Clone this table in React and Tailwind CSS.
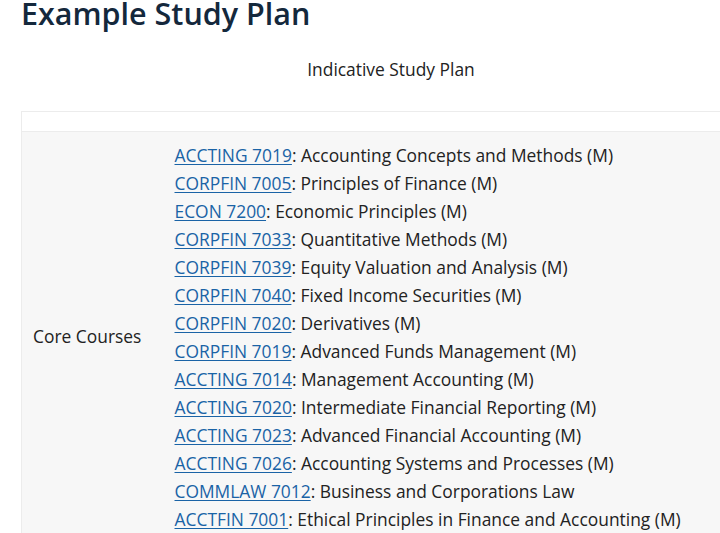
import React from 'react';

const courses = [
  ['ACCTING 7019', 'Accounting Concepts and Methods (M)'],
  ['CORPFIN 7005', 'Principles of Finance (M)'],
  ['ECON 7200', 'Economic Principles (M)'],
  ['CORPFIN 7033', 'Quantitative Methods (M)'],
  ['CORPFIN 7039', 'Equity Valuation and Analysis (M)'],
  ['CORPFIN 7040', 'Fixed Income Securities (M)'],
  ['CORPFIN 7020', 'Derivatives (M)'],
  ['CORPFIN 7019', 'Advanced Funds Management (M)'],
  ['ACCTING 7014', 'Management Accounting (M)'],
  ['ACCTING 7020', 'Intermediate Financial Reporting (M)'],
  ['ACCTING 7023', 'Advanced Financial Accounting (M)'],
  ['ACCTING 7026', 'Accounting Systems and Processes (M)'],
  ['COMMLAW 7012', 'Business and Corporations Law'],
  ['ACCTFIN 7001', 'Ethical Principles in Finance and Accounting (M)'],
];

const App = () => {
  return (
    <div className="w-[720px] h-[533px] overflow-hidden bg-white font-['Open_Sans',sans-serif] text-[#222]">
      <div className="pl-[21px]">
        <h2 className="mt-[-5px] text-[30.5px] leading-[36px] font-semibold text-[#14283c]">Example Study Plan</h2>
        <div className="w-[740px]">
          <div className="mt-[25px] text-center text-[17.4px] leading-[26px]">Indicative Study Plan</div>
          <table className="mt-[29px] w-full border-collapse">
            <thead>
              <tr>
                <th className="h-[20px] border border-[#ececec] bg-white" colSpan={2}></th>
              </tr>
            </thead>
            <tbody>
              <tr className="bg-[#f7f7f7]">
                <td className="w-[153px] border-l border-[#ececec] pl-[11px] align-middle text-[17.4px]">Core Courses</td>
                <td className="pt-[9px] pb-2 align-top">
                  {courses.map(([code, name]) => (
                    <div key={code} className="text-[17.4px] leading-[28px] whitespace-nowrap">
                      <a href="#" className="text-[#1a63a6] underline underline-offset-2">{code}</a>: {name}
                    </div>
                  ))}
                </td>
              </tr>
            </tbody>
          </table>
        </div>
      </div>
    </div>
  );
};

export default App;
